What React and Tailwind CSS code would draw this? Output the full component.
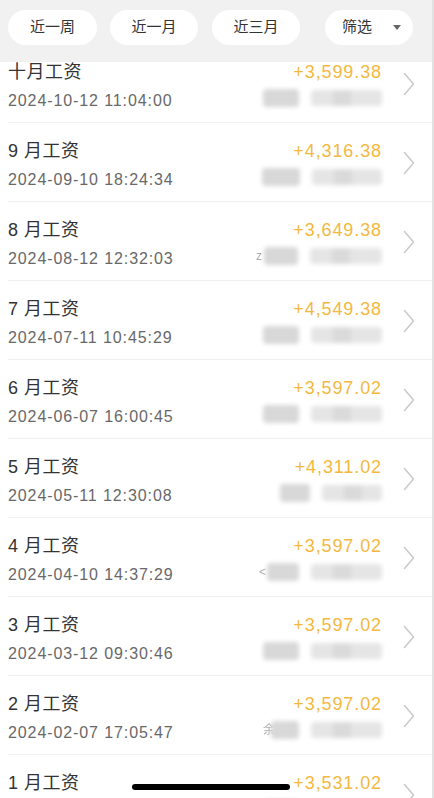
import React from "react";

const rows = [
  { title: "十月工资", time: "2024-10-12 11:04:00", amount: "+3,599.38", blob: [36, 71] },
  { title: "9 月工资", time: "2024-09-10 18:24:34", amount: "+4,316.38", blob: [38, 70] },
  { title: "8 月工资", time: "2024-08-12 12:32:03", amount: "+3,649.38", blob: [34, 72], mark: "z" },
  { title: "7 月工资", time: "2024-07-11 10:45:29", amount: "+4,549.38", blob: [36, 71] },
  { title: "6 月工资", time: "2024-06-07 16:00:45", amount: "+3,597.02", blob: [36, 71] },
  { title: "5 月工资", time: "2024-05-11 12:30:08", amount: "+4,311.02", blob: [30, 60] },
  { title: "4 月工资", time: "2024-04-10 14:37:29", amount: "+3,597.02", blob: [32, 71], mark: "<" },
  { title: "3 月工资", time: "2024-03-12 09:30:46", amount: "+3,597.02", blob: [36, 71] },
  { title: "2 月工资", time: "2024-02-07 17:05:47", amount: "+3,597.02", blob: [28, 71], mark: "余" },
  { title: "1 月工资", time: null, amount: "+3,531.02", blob: [36, 71] },
];

const Chevron = () => (
  <svg width="12" height="24" viewBox="0 0 12 24" fill="none">
    <path d="M1.5 1.5 L10.5 12 L1.5 22.5" stroke="#c9c9c9" strokeWidth="1.5" strokeLinecap="round" strokeLinejoin="round" />
  </svg>
);

const Pill = ({ children, className = "" }) => (
  <div className={`h-[35px] w-[88px] rounded-full bg-white flex items-center justify-center text-[15px] text-[#333] ${className}`}>
    {children}
  </div>
);

export default function App() {
  return (
    <div
      className="relative h-[798px] w-[434px] overflow-hidden bg-white border-r-2 border-[#e2e2e2]"
      style={{ fontFamily: '"Liberation Sans", "Noto Sans CJK SC", sans-serif' }}
    >
      {/* Filter bar */}
      <div className="relative z-10 h-[62px] bg-[#f1f1f1] flex items-start pt-[10px] pl-[8px] pr-[19px]">
        <Pill className="w-[89px]">近一周</Pill>
        <Pill className="ml-[13px]">近一月</Pill>
        <Pill className="ml-[14px]">近三月</Pill>
        <div className="ml-auto h-[35px] w-[88px] rounded-full bg-white flex items-center pl-[17px] text-[15px] text-[#333]">
          <span>筛选</span>
          <span className="ml-[21px] w-0 h-0 border-l-[4.5px] border-r-[4.5px] border-t-[5px] border-l-transparent border-r-transparent border-t-[#666]" />
        </div>
      </div>

      {/* List */}
      <div className="-mt-[18px]">
        {rows.map((r) => (
          <div key={r.title} className="ml-[8px] h-[79px] border-b border-[#efefef] flex items-start pr-[17px]">
            <div className="flex-1 pt-[16px]">
              <div className="text-[18px] leading-[24px] text-[#333] tracking-[0.5px]">{r.title}</div>
              {r.time && (
                <div className="mt-[6px] text-[16px] leading-[22px] text-[#686868] tracking-[0.9px]">{r.time}</div>
              )}
            </div>
            <div className="pt-[16px] flex flex-col items-end">
              <div className="text-[18px] leading-[24px] text-[#f3b840] tracking-[0.9px]">{r.amount}</div>
              <div className="mt-[4px] h-[19px] flex items-center gap-[12px] relative">
                {r.mark && (
                  <span className="absolute -left-[8px] top-[1px] text-[12px] text-[#888] opacity-70">{r.mark}</span>
                )}
                <div className="h-[18px] bg-[#d8d8d8] blur-[2px] rounded-sm" style={{ width: r.blob[0] }} />
                <div className="h-[16px] bg-[#e5e5e5] blur-[2px] rounded-sm flex" style={{ width: r.blob[1] }}>
                  <div className="ml-[22px] w-[18px] h-full bg-[#dadada]" />
                </div>
              </div>
            </div>
            <div className="ml-[21px] self-center mt-[1px]">
              <Chevron />
            </div>
          </div>
        ))}
      </div>

      {/* Home indicator */}
      <div className="absolute left-[132px] bottom-[8px] h-[6px] w-[158px] rounded-full bg-black z-20" />
    </div>
  );
}
